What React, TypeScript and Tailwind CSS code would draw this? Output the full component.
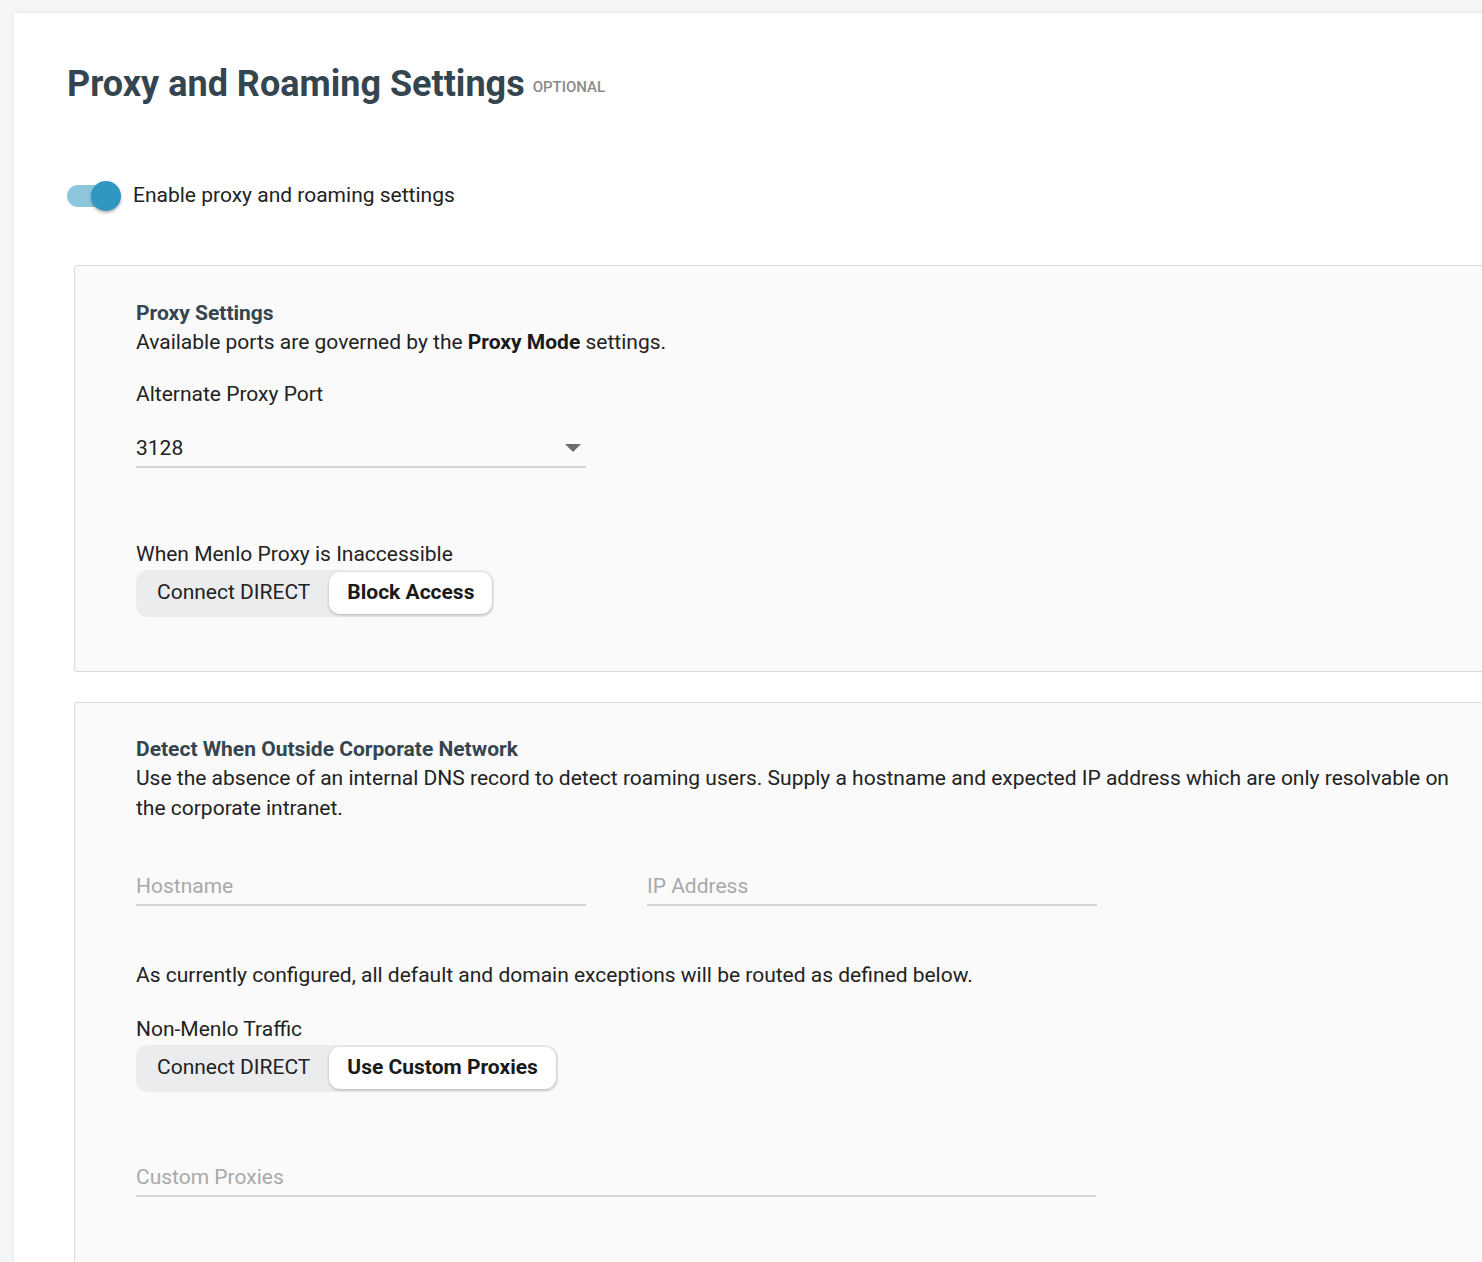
const font = { fontFamily: 'Roboto, "Liberation Sans", sans-serif' }

function Segmented({ left, right }: { left: string; right: string }) {
  return (
    <div className="inline-flex items-center rounded-[12px] bg-[#ebecee] pt-[2px] pb-[3px] pl-[2px] pr-[2px] h-[47px]">
      <div className="px-[19px] text-[21px] text-[#222]">{left}</div>
      <div className="h-[42px] flex items-center px-[18px] rounded-[11px] bg-white shadow-[0_1px_3px_rgba(0,0,0,0.25)] text-[21px] font-bold text-[#1a1a1a]">
        {right}
      </div>
    </div>
  )
}

function Field({ placeholder, width }: { placeholder: string; width: string }) {
  return (
    <div className={`${width} border-b-2 border-[#d3d5d9] pb-[5px] text-[21px] leading-[26px] text-[#a9a9a9]`}>
      {placeholder}
    </div>
  )
}

export default function App() {
  return (
    <div style={font} className="min-h-screen bg-[#f4f5f7] pt-[13px] pl-[14px] overflow-hidden">
      <div className="bg-white shadow-[0_0_4px_rgba(0,0,0,0.08)] pl-[53px] pt-[49px] pb-[40px] w-[1520px]">
        <div className="flex items-center gap-[8px]">
          <h1 className="text-[36px] leading-[44px] font-bold text-[#34454f]">Proxy and Roaming Settings</h1>
          <span className="mt-[6px] text-[15px] font-medium text-[#8a8a8a]">OPTIONAL</span>
        </div>

        <div className="flex items-center mt-[74px] gap-[12px]">
          <div className="relative w-[54px] h-[30px] flex items-center">
            <div className="w-[52px] h-[22px] rounded-full bg-[#8cc6dc]" />
            <div className="absolute right-0 top-0 w-[30px] h-[30px] rounded-full bg-[#3097c3] shadow-[0_2px_3px_rgba(0,0,0,0.3)]" />
          </div>
          <span className="text-[21px] text-[#222]">Enable proxy and roaming settings</span>
        </div>

        <div className="ml-[7px] mt-[53px] border border-[#d9dadc] rounded-[3px] bg-[#fafafa] pl-[61px] pt-[33px] pb-[54px]">
          <div className="text-[21px] leading-[28px] font-bold text-[#34454f]">Proxy Settings</div>
          <div className="text-[21px] leading-[30px] text-[#222]">
            Available ports are governed by the <b className="font-bold text-[#1a1a1a]">Proxy Mode</b> settings.
          </div>
          <div className="mt-[22px] text-[21px] leading-[30px] text-[#222]">Alternate Proxy Port</div>
          <div className="mt-[26px] w-[450px] border-b-2 border-[#d3d5d9] pb-[5px] flex items-center justify-between text-[21px] leading-[26px] text-[#222]">
            <span>3128</span>
            <svg width="16" height="8" viewBox="0 0 16 8" className="mr-[5px]">
              <path d="M0 0h16L8 8z" fill="#6b6b6b" />
            </svg>
          </div>
          <div className="mt-[71px] text-[21px] leading-[30px] text-[#222]">When Menlo Proxy is Inaccessible</div>
          <div className="mt-[1px]">
            <Segmented left="Connect DIRECT" right="Block Access" />
          </div>
        </div>

        <div className="ml-[7px] mt-[30px] border border-[#d9dadc] rounded-[3px] bg-[#fafafa] pl-[61px] pt-[32px] pb-[80px]">
          <div className="text-[21px] leading-[28px] font-bold text-[#34454f]">Detect When Outside Corporate Network</div>
          <div className="text-[21px] leading-[30px] text-[#222] w-[1330px]">
            Use the absence of an internal DNS record to detect roaming users. Supply a hostname and expected IP address which are only resolvable on the corporate intranet.
          </div>
          <div className="mt-[50px] flex gap-[61px]">
            <Field placeholder="Hostname" width="w-[450px]" />
            <Field placeholder="IP Address" width="w-[450px]" />
          </div>
          <div className="mt-[54px] text-[21px] leading-[30px] text-[#222]">
            As currently configured, all default and domain exceptions will be routed as defined below.
          </div>
          <div className="mt-[24px] text-[21px] leading-[30px] text-[#222]">Non-Menlo Traffic</div>
          <div className="mt-[1px]">
            <Segmented left="Connect DIRECT" right="Use Custom Proxies" />
          </div>
          <div className="mt-[72px]">
            <Field placeholder="Custom Proxies" width="w-[960px]" />
          </div>
        </div>
      </div>
    </div>
  )
}
